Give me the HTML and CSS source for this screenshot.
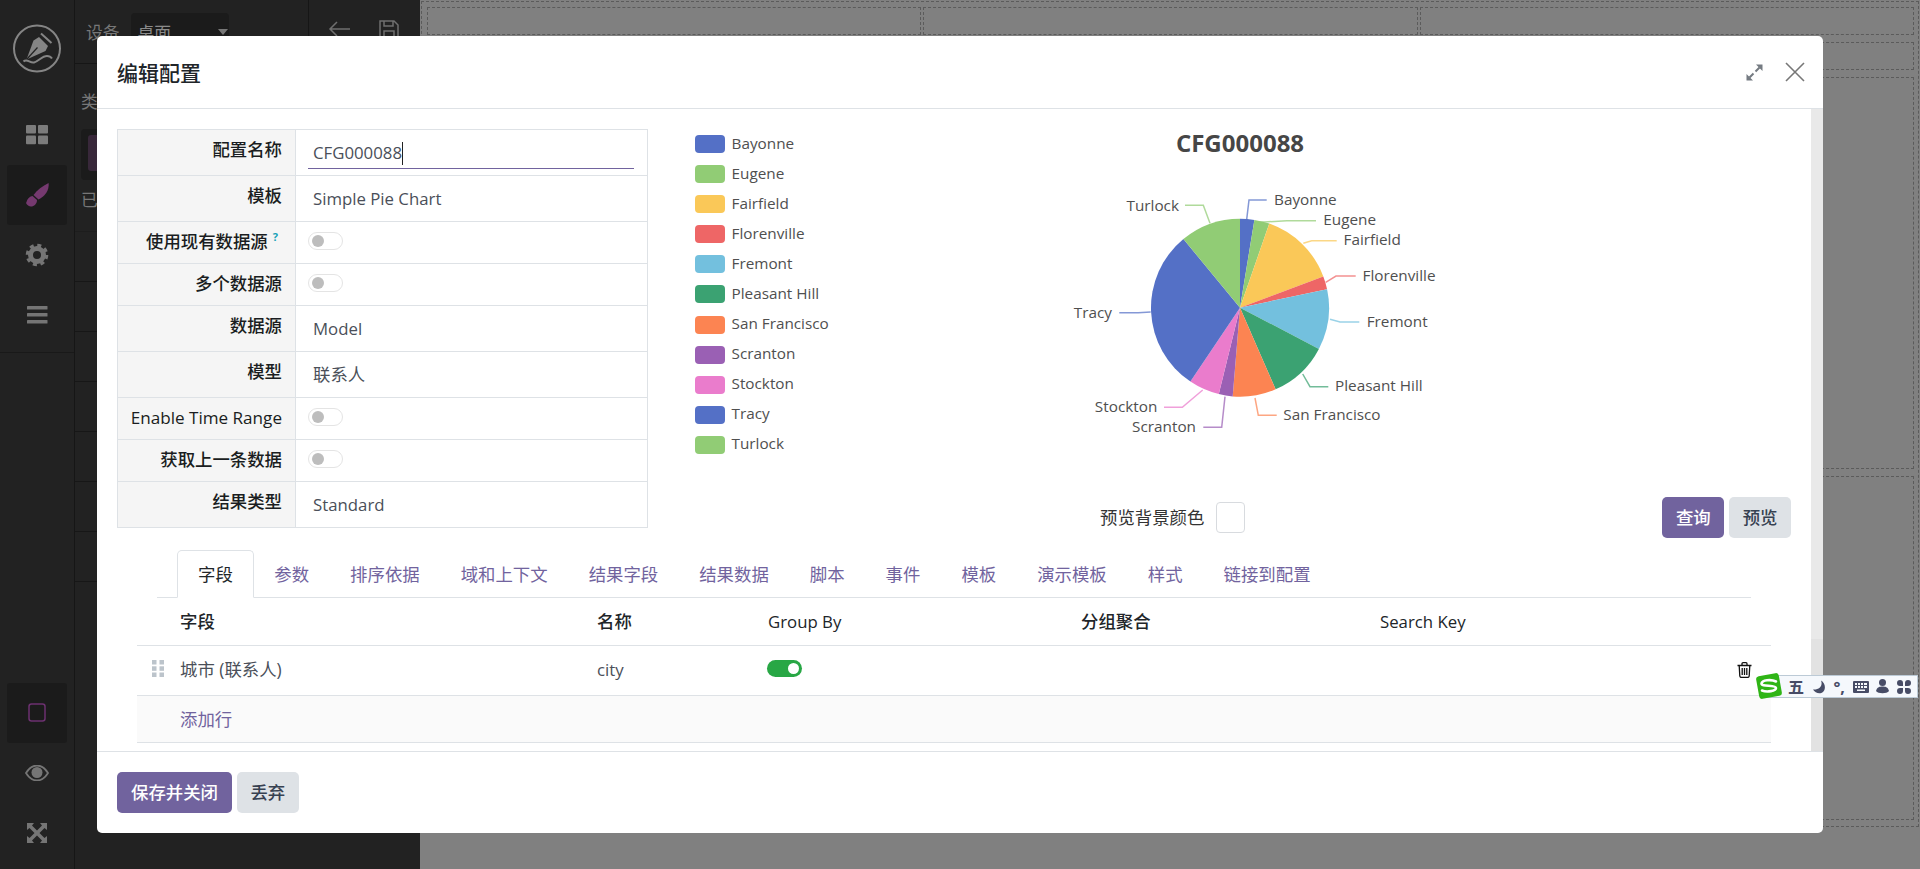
FILE: index.html
```html
<!DOCTYPE html>
<html lang="zh">
<head>
<meta charset="utf-8">
<title>编辑配置</title>
<link rel="stylesheet" href="styles.css">
</head>
<body>
<div class="app">
  <aside class="sidebar">
    <div class="side-top">
      <svg class="logo" width="60" height="64" viewBox="7 16 60 64">
        <circle cx="37" cy="48.500" r="23" fill="none" stroke="#858585" stroke-width="2"/>
        <path d="M26.500 59.500 L33.500 40.500 L39 37 L48 46 L45.500 51 Z" fill="#858585"/>
        <path d="M41 33.500 L51.500 43" stroke="#858585" stroke-width="2" fill="none"/>
        <path d="M27 59 L37.500 47.500" stroke="#222" stroke-width="1.200"/>
        <path d="M23.500 61.500 C27 58 30 63.500 34 62.500 C39 61 42 56 47 56 C49 56 51 57 52 58.500" fill="none" stroke="#858585" stroke-width="2"/>
      </svg>
    </div>
    <div class="side-item">
      <svg width="24" height="20" viewBox="0 0 24 20" fill="#7c7c7c"><rect x="1" width="10" height="8.600" rx="1"/><rect x="13" width="10" height="8.600" rx="1"/><rect x="1" y="10.600" width="10" height="8.600" rx="1"/><rect x="13" y="10.600" width="10" height="8.600" rx="1"/></svg>
    </div>
    <div class="side-item side-active">
      <svg width="26" height="26" viewBox="24 182 26 26" fill="#75396f"><path d="M48.600 183 C49.600 190 44.500 197 38.500 199.500 L33.500 195 C37 190 42.500 186 48.600 183 Z"/><path d="M26 203 C27 202 27 197 32.500 196 L37 200 C37 204 34 206.500 31 206.500 C29 206.500 27 205 26 203 Z"/></svg>
    </div>
    <div class="side-item">
      <svg width="24" height="24" viewBox="-12 -12 24 24" fill="none" stroke="#757575"><circle r="6.500" stroke-width="5"/><circle r="9.500" stroke-width="3.600" stroke-dasharray="3.900 3.560"/></svg>
    </div>
    <div class="side-item">
      <svg width="22" height="18" viewBox="0 0 22 18" fill="#757575"><rect x="1" y="0" width="20.500" height="3.600" rx=".6"/><rect x="1" y="7" width="20.500" height="3.600" rx=".6"/><rect x="1" y="14" width="20.500" height="3.600" rx=".6"/></svg>
    </div>
    <div class="side-bottom">
      <div class="side-item side-active">
        <svg width="18" height="20" viewBox="0 0 18 20" fill="none"><rect x="1" y="1" width="16" height="17" rx="2.500" stroke="#6c3170" stroke-width="1.500"/></svg>
      </div>
      <div class="side-item">
        <svg width="24" height="16" viewBox="0 0 24 16"><path d="M1 8 C5 1.500 9 .5 12 .5 C15 .5 19 1.500 23 8 C19 14.500 15 15.500 12 15.500 C9 15.500 5 14.500 1 8 Z" fill="none" stroke="#757575" stroke-width="1.800"/><circle cx="12" cy="7.500" r="5.500" fill="#757575"/></svg>
      </div>
      <div class="side-item">
        <svg width="22" height="22" viewBox="0 0 22 22" fill="#757575"><path d="M1 1 H8 L6 3.500 L11 8.500 L16 3.500 L14 1 H21 V8 L18.500 6 L13.500 11 L18.500 16 L21 14 V21 H14 L16 18.500 L11 13.500 L6 18.500 L8 21 H1 V14 L3.500 16 L8.500 11 L3.500 6 L1 8 Z"/></svg>
      </div>
    </div>
  </aside>

  <section class="panel">
    <div class="panel-top">
      <div class="device">
        <span class="dim-text">设备</span>
        <div class="select"><span>桌面</span><i class="caret-down"></i></div>
      </div>
      <div class="panel-actions">
        <svg width="24" height="18" viewBox="0 0 24 18" fill="none" stroke="#6f6f6f" stroke-width="1.500"><path d="M22 9 H2 M9 2 L2 9 L9 16"/></svg>
        <svg width="20" height="20" viewBox="0 0 20 20" fill="none" stroke="#6f6f6f" stroke-width="1.500"><path d="M1 1 H15 L19 5 V19 H1 Z M5 1 V6 H14 V1 M5 19 V11 H15 V19"/></svg>
      </div>
    </div>
    <div class="panel-section">
      <div class="dim-text">类</div>
      <div class="thumb-card"><div class="thumb"></div></div>
      <div class="dim-text">已</div>
    </div>
    <div class="panel-row"></div>
    <div class="panel-row"></div>
    <div class="panel-row"></div>
    <div class="panel-row"></div>
    <div class="panel-row"></div>
    <div class="panel-row"></div>
    <div class="panel-row"></div>
  </section>

  <main class="canvas">
    <div class="dash-outer">
      <div class="dash-cols">
        <div class="dash"></div>
        <div class="dash"></div>
        <div class="dash"></div>
      </div>
      <div class="dash dash-short"></div>
      <div class="dash dash-mid"></div>
      <div class="dash dash-big"></div>
    </div>
  </main>
</div>

<div class="modal">
  <header class="modal-head">
    <h4 class="modal-title">编辑配置</h4>
    <div class="modal-tools">
      <svg width="17" height="17" viewBox="0 0 17 17" fill="#757b82" stroke="#757b82"><path stroke="none" d="M16.500 .5 V7 L10 .5 Z M.5 16.500 V10 L7 16.500 Z"/><path stroke-width="2" d="M13.500 3.500 L9.500 7.500 M3.500 13.500 L7.500 9.500"/></svg>
      <svg width="20" height="20" viewBox="0 0 20 20" fill="none" stroke="#777" stroke-width="1.600"><path d="M1 1 L19 19 M19 1 L1 19"/></svg>
    </div>
  </header>

  <div class="modal-body">
    <div class="modal-content">
      <div class="top-row">
        <div class="form-table">
          <div class="form-row">
            <div class="form-label">配置名称</div>
            <div class="form-value"><div class="input">CFG000088<i class="text-caret"></i></div></div>
          </div>
          <div class="form-row">
            <div class="form-label">模板</div>
            <div class="form-value">Simple Pie Chart</div>
          </div>
          <div class="form-row form-row-short">
            <div class="form-label">使用现有数据源<sup class="help">?</sup></div>
            <div class="form-toggle"><span class="toggle"></span></div>
          </div>
          <div class="form-row form-row-short">
            <div class="form-label">多个数据源</div>
            <div class="form-toggle"><span class="toggle"></span></div>
          </div>
          <div class="form-row">
            <div class="form-label">数据源</div>
            <div class="form-value">Model</div>
          </div>
          <div class="form-row">
            <div class="form-label">模型</div>
            <div class="form-value cjk">联系人</div>
          </div>
          <div class="form-row form-row-short">
            <div class="form-label form-label-latin">Enable Time Range</div>
            <div class="form-toggle"><span class="toggle"></span></div>
          </div>
          <div class="form-row form-row-short">
            <div class="form-label">获取上一条数据</div>
            <div class="form-toggle"><span class="toggle"></span></div>
          </div>
          <div class="form-row">
            <div class="form-label">结果类型</div>
            <div class="form-value">Standard</div>
          </div>
        </div>

        <div class="chart-col">
          <svg class="chart" width="1163" height="368" viewBox="648 129 1163 368">
            <g class="legend-swatches">
              <rect x="695" y="135" width="30" height="18" rx="4" fill="#5470c6"/>
              <rect x="695" y="165" width="30" height="18" rx="4" fill="#91cc75"/>
              <rect x="695" y="195" width="30" height="18" rx="4" fill="#fac858"/>
              <rect x="695" y="225" width="30" height="18" rx="4" fill="#ee6666"/>
              <rect x="695" y="255" width="30" height="18" rx="4" fill="#73c0de"/>
              <rect x="695" y="285" width="30" height="18" rx="4" fill="#3ba272"/>
              <rect x="695" y="316" width="30" height="18" rx="4" fill="#fc8452"/>
              <rect x="695" y="346" width="30" height="18" rx="4" fill="#9a60b4"/>
              <rect x="695" y="376" width="30" height="18" rx="4" fill="#ea7ccc"/>
              <rect x="695" y="406" width="30" height="18" rx="4" fill="#5470c6"/>
              <rect x="695" y="436" width="30" height="18" rx="4" fill="#91cc75"/>
            </g>
            <g class="chart-text">
              <text x="731.500" y="142.500">Bayonne</text>
              <text x="731.500" y="172.500">Eugene</text>
              <text x="731.500" y="202.500">Fairfield</text>
              <text x="731.500" y="232.500">Florenville</text>
              <text x="731.500" y="262.500">Fremont</text>
              <text x="731.500" y="292.500">Pleasant Hill</text>
              <text x="731.500" y="322.500">San Francisco</text>
              <text x="731.500" y="353">Scranton</text>
              <text x="731.500" y="383">Stockton</text>
              <text x="731.500" y="413">Tracy</text>
              <text x="731.500" y="443">Turlock</text>
            </g>
            <text class="chart-title" x="1240" y="142">CFG000088</text>
            <g transform="translate(1240 307.700)">
              <path fill="#5470c6" d="M0 0 L0 -89 A89 89 0 0 1 14.400 -87.800 Z"/>
              <path fill="#91cc75" d="M0 0 L14.400 -87.800 A89 89 0 0 1 29.300 -84.100 Z"/>
              <path fill="#fac858" d="M0 0 L29.300 -84.100 A89 89 0 0 1 83.300 -31.300 Z"/>
              <path fill="#ee6666" d="M0 0 L83.300 -31.300 A89 89 0 0 1 87.100 -18.500 Z"/>
              <path fill="#73c0de" d="M0 0 L87.100 -18.500 A89 89 0 0 1 78.900 41.200 Z"/>
              <path fill="#3ba272" d="M0 0 L78.900 41.200 A89 89 0 0 1 35.600 81.600 Z"/>
              <path fill="#fc8452" d="M0 0 L35.600 81.600 A89 89 0 0 1 -7.300 88.700 Z"/>
              <path fill="#9a60b4" d="M0 0 L-7.300 88.700 A89 89 0 0 1 -21.200 86.400 Z"/>
              <path fill="#ea7ccc" d="M0 0 L-21.200 86.400 A89 89 0 0 1 -49.600 73.900 Z"/>
              <path fill="#5470c6" d="M0 0 L-49.600 73.900 A89 89 0 0 1 -56.600 -68.700 Z"/>
              <path fill="#91cc75" d="M0 0 L-56.600 -68.700 A89 89 0 0 1 0 -89 Z"/>
            </g>
            <g class="leaders">
              <path stroke="#5470c6" d="M1246.700 219.300 L1249 200 H1266.700"/>
              <path stroke="#91cc75" d="M1260 222.300 L1286.700 220.700 H1316"/>
              <path stroke="#fac858" d="M1303.300 243.300 L1311.700 240.700 H1336.700"/>
              <path stroke="#ee6666" d="M1325.700 282.300 L1336 276 H1355.700"/>
              <path stroke="#73c0de" d="M1330 319.300 L1340 322 H1359.300"/>
              <path stroke="#3ba272" d="M1302.700 374 L1310 386.700 H1328.300"/>
              <path stroke="#fc8452" d="M1255 398 L1258.300 415.300 H1276.700"/>
              <path stroke="#9a60b4" d="M1225 396.700 L1221.700 427.300 H1203.300"/>
              <path stroke="#ea7ccc" d="M1202.700 390 L1182.300 407.300 H1164"/>
              <path stroke="#5470c6" d="M1150.700 312 L1138.300 312.700 H1119.300"/>
              <path stroke="#91cc75" d="M1210 223.300 L1203.300 205.300 H1185"/>
            </g>
            <g class="chart-text">
              <text x="1274" y="198.500">Bayonne</text>
              <text x="1323.300" y="219">Eugene</text>
              <text x="1343.500" y="238.500">Fairfield</text>
              <text x="1362.500" y="275">Florenville</text>
              <text x="1366.700" y="320.500">Fremont</text>
              <text x="1335" y="384.500">Pleasant Hill</text>
              <text x="1283.300" y="414">San Francisco</text>
            </g>
            <g class="chart-text chart-text-end">
              <text x="1196" y="426">Scranton</text>
              <text x="1157.300" y="406">Stockton</text>
              <text x="1112" y="312">Tracy</text>
              <text x="1179" y="205">Turlock</text>
            </g>
          </svg>
          <div class="preview-row">
            <div class="bg-picker">
              <span class="cjk">预览背景颜色</span>
              <span class="swatch"></span>
            </div>
            <div class="preview-btns">
              <button class="btn btn-primary btn-compact">查询</button>
              <button class="btn btn-secondary btn-compact">预览</button>
            </div>
          </div>
        </div>
      </div>

      <nav class="tabs">
        <a class="tab tab-active">字段</a>
        <a class="tab">参数</a>
        <a class="tab">排序依据</a>
        <a class="tab">域和上下文</a>
        <a class="tab">结果字段</a>
        <a class="tab">结果数据</a>
        <a class="tab">脚本</a>
        <a class="tab">事件</a>
        <a class="tab">模板</a>
        <a class="tab">演示模板</a>
        <a class="tab">样式</a>
        <a class="tab">链接到配置</a>
      </nav>

      <div class="list">
        <div class="list-row list-head">
          <div></div>
          <div class="cjk">字段</div>
          <div class="cjk">名称</div>
          <div>Group By</div>
          <div class="cjk">分组聚合</div>
          <div>Search Key</div>
          <div></div>
        </div>
        <div class="list-row list-data">
          <div class="handle">
            <svg width="12" height="17" viewBox="0 0 12 17" fill="#bcc4cb"><rect width="4.500" height="4.500"/><rect x="7.500" width="4.500" height="4.500"/><rect y="6.300" width="4.500" height="4.500"/><rect x="7.500" y="6.300" width="4.500" height="4.500"/><rect y="12.500" width="4.500" height="4.500"/><rect x="7.500" y="12.500" width="4.500" height="4.500"/></svg>
          </div>
          <div class="cjk">城市 (联系人)</div>
          <div>city</div>
          <div><span class="toggle-on"></span></div>
          <div></div>
          <div></div>
          <div class="trash">
            <svg width="15" height="16" viewBox="0 0 15 16" fill="none" stroke="#111" stroke-width="1.300"><path d="M.5 3.500 H14.500 M5 3.500 V1.800 C5 1 5.500 .7 6 .7 H9 C9.500 .7 10 1 10 1.800 V3.500 M2.200 3.500 L2.800 14 C2.900 15 3.400 15.400 4.200 15.400 H10.800 C11.600 15.400 12.100 15 12.200 14 L12.800 3.500 M5.200 6 V13 M7.500 6 V13 M9.800 6 V13"/></svg>
          </div>
        </div>
        <div class="list-row list-add">
          <div></div>
          <a class="cjk">添加行</a>
        </div>
      </div>
    </div>
    <div class="scrollbar"><div class="scroll-thumb"></div></div>
  </div>

  <footer class="modal-foot">
    <button class="btn btn-primary">保存并关闭</button>
    <button class="btn btn-secondary btn-compact">丢弃</button>
  </footer>
</div>

<div class="ime">
  <svg class="ime-logo" width="28" height="28" viewBox="0 0 28 28"><rect x="2.500" y="2.500" width="23" height="23" rx="3" fill="#2fb516" transform="rotate(-10 14 14)"/><path d="M21 9.500 C16 7 7 8 6.500 11.500 C6 15 21 12.500 21 16 C21 19 12 20.500 7 18.500" fill="none" stroke="#fff" stroke-width="2.600" stroke-linecap="round"/></svg>
  <div class="ime-bar">
    <span class="ime-wu">五</span>
    <svg width="14" height="14" viewBox="0 0 14 14" fill="#474c66"><path d="M9 .5 C11 5 8 10 1 9.500 C3 13 8 14.500 11 12 C14 9 13.500 3 9 .5 Z"/></svg>
    <span class="ime-punct">°,</span>
    <svg width="16" height="12" viewBox="0 0 16 12" fill="#474c66"><path d="M1 0 H15 A1 1 0 0 1 16 1 V11 A1 1 0 0 1 15 12 H1 A1 1 0 0 1 0 11 V1 A1 1 0 0 1 1 0 Z M2 2 V4 H4 V2 Z M5 2 V4 H7 V2 Z M8 2 V4 H10 V2 Z M11 2 V4 H14 V2 Z M2 5 V7 H4 V5 Z M5 5 V7 H7 V5 Z M8 5 V7 H10 V5 Z M11 5 V7 H14 V5 Z M4 8.500 V10 H12 V8.500 Z" fill-rule="evenodd"/></svg>
    <svg width="13" height="15" viewBox="0 0 13 15" fill="#474c66"><circle cx="6.500" cy="3.500" r="3.500"/><path d="M0 12 C1 8 4 7.500 6.500 7.500 C9 7.500 12 8 13 12 C11 15 2 15 0 12 Z"/></svg>
    <svg width="14" height="14" viewBox="0 0 14 14" fill="#474c66"><path d="M6 6 H3 A3 3 0 1 1 6 3 Z M8 6 V3 A3 3 0 1 1 11 6 Z M6 8 V11 A3 3 0 1 1 3 8 Z M8 8 H11 A3 3 0 1 1 8 11 Z"/></svg>
  </div>
</div>
</body>
</html>
```

FILE: styles.css
```css
* { box-sizing: border-box; }

html, body {
  margin: 0;
  height: 100%;
  overflow: hidden;
}

body {
  position: relative;
  width: 1920px;
  height: 869px;
  background: #808080;
  color: #212529;
  font-family: "Open Sans", "Noto Sans CJK SC", sans-serif;
  font-size: 16.8px;
  line-height: 25px;
}

.cjk { font-size: 17.4px; }

.app {
  display: flex;
  height: 869px;
}

/* sidebar */
.sidebar {
  display: flex;
  flex-direction: column;
  align-items: stretch;
  width: 75px;
  height: 869px;
  background: #222;
  border-right: 1px solid #161616;
}

.side-top {
  height: 105px;
  padding-top: 16px;
  display: flex;
  justify-content: center;
}

.side-item {
  display: flex;
  align-items: center;
  justify-content: center;
  width: 60px;
  height: 60px;
  margin-left: 7px;
  border-radius: 3px;
}

.side-active { background: #1b1b1b; }

.side-bottom {
  margin-top: 7px;
  padding-top: 330px;
  border-top: 1px solid #191919;
}

/* panel */
.panel {
  width: 345px;
  height: 869px;
  background: #222;
  color: #777;
}

.panel-top {
  display: flex;
  height: 64px;
  border-bottom: 1px solid #161616;
}

.device {
  display: flex;
  gap: 11px;
  width: 234px;
  padding: 13px 0 0 11px;
  border-right: 1px solid #161616;
}

.dim-text { line-height: 40px; }

.select {
  position: relative;
  width: 98px;
  height: 46px;
  padding: 7px 7px;
  line-height: 26px;
  background: #1b1b1b;
  border-radius: 4px;
  color: #8a8a8a;
}

.caret-down {
  position: absolute;
  right: 1px;
  top: 16px;
  border: 5px solid transparent;
  border-top: 6px solid #777;
}

.panel-actions {
  display: flex;
  gap: 27px;
  padding: 20px 0 0 19px;
}

.panel-section {
  height: 168px;
  padding: 18px 0 0 6px;
  border-bottom: 1px solid #1d1d1d;
}

.thumb-card {
  height: 51px;
  margin: 7px 0 0;
  padding: 6px 7px;
  background: #1b1b1b;
  border-radius: 4px;
}

.thumb {
  height: 36px;
  background: #38283a;
  border-radius: 3px;
}

.panel-row {
  height: 50px;
  border-bottom: 1px solid #171717;
}

/* canvas */
.canvas {
  flex: 1;
  padding: 1px 1px 42px 1px;
  background: #808080;
}

.dash-outer {
  display: flex;
  flex-direction: column;
  gap: 7px;
  height: 826px;
  padding: 5px 4px 6px 5px;
  border: 1px dashed #5b5b5b;
}

.dash-cols {
  display: grid;
  grid-template-columns: 1fr 1fr 1fr;
  gap: 2px;
  height: 28px;
}

.dash { border: 1px dashed #5b5b5b; }
.dash-short { height: 28px; }
.dash-mid { height: 392px; }
.dash-big { flex: 1; }

/* modal */
.modal {
  position: absolute;
  left: 97px;
  top: 36px;
  display: flex;
  flex-direction: column;
  width: 1726px;
  height: 797px;
  background: #fff;
  border-radius: 5px;
}

.modal-head {
  display: flex;
  align-items: center;
  justify-content: space-between;
  flex: none;
  height: 73px;
  padding: 0 18px 0 20px;
  border-bottom: 1px solid #dee2e6;
}

.modal-title {
  margin: 1px 0 0;
  font-size: 21px;
  font-weight: 500;
  line-height: 30px;
}

.modal-tools {
  display: flex;
  align-items: center;
  gap: 22px;
}

.modal-body {
  display: flex;
  flex: 1;
  min-height: 0;
}

.modal-content {
  flex: 1;
  min-width: 0;
  padding: 20px 0 0 20px;
}

.scrollbar {
  flex: none;
  width: 12px;
  background: #e2e2e2;
}

.scroll-thumb {
  height: 530px;
  background: #e9e9e9;
}

.modal-foot {
  display: flex;
  gap: 5px;
  flex: none;
  height: 82px;
  padding: 20px 20px;
  border-top: 1px solid #dee2e6;
}

/* top row */
.top-row {
  display: flex;
  height: 409px;
}

.form-table {
  flex: none;
  width: 531px;
  height: 399px;
  border: 1px solid #dee2e6;
  border-bottom: 0;
}

.form-row {
  display: grid;
  grid-template-columns: 178px 1fr;
  height: 46px;
  border-bottom: 1px solid #dee2e6;
}

.form-row-short { height: 42px; }

.form-label {
  padding: 7px 13px 0 0;
  text-align: right;
  font-size: 17.400px;
  font-weight: 500;
  color: #1a1d21;
  background: #f5f5f5;
  border-right: 1px solid #dee2e6;
}

.form-label-latin { font-size: 17.100px; }

.help {
  margin: 0 4px 0 5px;
  font-size: 11px;
  line-height: 0;
  font-weight: 700;
  color: #17a2b8;
}

.form-value {
  padding: 10px 0 0 17px;
  color: #4a4f59;
}

.form-value .input {
  position: relative;
  height: 29px;
  margin: 0 13px 0 -5px;
  padding-left: 5px;
  border-bottom: 1px solid #71639e;
  line-height: 25px;
}

.text-caret {
  display: inline-block;
  width: 1px;
  height: 23px;
  margin-bottom: -6px;
  background: #222;
}

.form-toggle { padding: 10px 0 0 12px; }

.toggle {
  display: block;
  position: relative;
  width: 35px;
  height: 18px;
  background: #fff;
  border: 1px solid #e4e4e4;
  border-radius: 9px;
}

.toggle::before {
  content: "";
  position: absolute;
  left: 3px;
  top: 2px;
  width: 12px;
  height: 12px;
  border-radius: 50%;
  background: #bdbdbd;
}

/* chart */
.chart-col {
  flex: 1;
  min-width: 0;
  display: flex;
  flex-direction: column;
}

.chart { display: block; flex: none; }

.chart-text text {
  font-size: 15.300px;
  fill: #4f4f4f;
  dominant-baseline: central;
}

.chart-text-end text { text-anchor: end; }

.chart-title {
  font-size: 24px;
  font-weight: 700;
  fill: #464646;
  text-anchor: middle;
  dominant-baseline: central;
}

.leaders path {
  fill: none;
  stroke-width: 1.500;
  stroke-opacity: .72;
}

.preview-row {
  display: flex;
  align-items: flex-start;
  padding-right: 20px;
}

.bg-picker {
  display: flex;
  align-items: center;
  gap: 12px;
  height: 41px;
  margin-left: 452px;
  color: #333;
}

.swatch {
  width: 29px;
  height: 31px;
  margin-top: -1px;
  background: #fff;
  border: 1px solid #d8dbdf;
  border-radius: 4px;
}

.preview-btns {
  display: flex;
  gap: 5px;
  margin-left: auto;
}

.btn {
  height: 41px;
  padding: 0 14px;
  border: 0;
  border-radius: 5px;
  font: 500 17.400px/25px "Open Sans", "Noto Sans CJK SC", sans-serif;
}

.btn-compact { padding: 0 13.500px; }
.btn-primary { background: #71639e; color: #fff; }
.btn-secondary { background: #dee2e6; color: #374151; }

/* tabs */
.tabs {
  display: flex;
  width: 1594px;
  height: 48px;
  margin: 12px 0 0 40px;
  padding-left: 20px;
  border-bottom: 1px solid #dee2e6;
}

.tab {
  height: 48px;
  padding: 11px 20.500px 0;
  font-size: 17.400px;
  color: #71639e;
  border: 1px solid transparent;
  border-width: 1px 0;
}

.tab-active {
  padding: 11px 20px 0;
  color: #212529;
  background: #fff;
  border: 1px solid #dee2e6;
  border-bottom-color: #fff;
  border-radius: 5px 5px 0 0;
}

/* list */
.list {
  width: 1634px;
  margin-left: 20px;
}

.list-row {
  display: grid;
  grid-template-columns: 43px 417px 171px 313px 299px 357px 34px;
  align-items: center;
  border-bottom: 1px solid #dee2e6;
}

.list-head { height: 48px; font-weight: 500; }
.list-data { height: 50px; padding-bottom: 2px; color: #4a4f59; }
.list-add { height: 47px; background: #fafafa; }
.list-add a { color: #71639e; }

.handle {
  display: flex;
  justify-content: flex-end;
  padding: 0 16px 3px 0;
}

.handle svg, .trash svg { display: block; }

.toggle-on {
  display: block;
  position: relative;
  width: 35px;
  height: 17px;
  margin: -2px 0 0 -1px;
  background: #28a745;
  border-radius: 9px;
}

.toggle-on::after {
  content: "";
  position: absolute;
  right: 3px;
  top: 3px;
  width: 11px;
  height: 11px;
  border-radius: 50%;
  background: #fff;
}

/* input method widget */
.ime {
  position: absolute;
  left: 1755px;
  top: 672px;
  width: 163px;
  height: 28px;
}

.ime-logo {
  position: absolute;
  left: 0;
  top: 0;
  z-index: 1;
}

.ime-bar {
  display: flex;
  align-items: center;
  justify-content: space-between;
  position: absolute;
  left: 12px;
  top: 3px;
  width: 151px;
  height: 23px;
  padding: 0 6px 0 20px;
  background: #f5f8fc;
  border: 1px solid #bccad6;
  color: #474c66;
}

.ime-wu {
  font-size: 16px;
  font-weight: 700;
  line-height: 20px;
}

.ime-punct {
  font-size: 16px;
  font-weight: 700;
  line-height: 20px;
}
```
